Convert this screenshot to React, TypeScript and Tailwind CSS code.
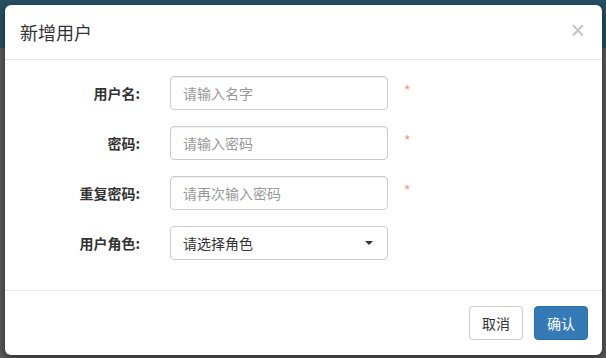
import React from "react";

const font = { fontFamily: '"Noto Sans CJK SC", "Liberation Sans", sans-serif' };

function Row({ label, placeholder, required = true }: { label: string; placeholder: string; required?: boolean }) {
  return (
    <div className="flex items-center h-[34px]">
      <label className="w-[120px] text-right text-[14px] font-bold text-[#333]">{label}</label>
      <input
        className="ml-[30px] w-[218px] h-[34px] rounded-[4px] border border-[#ccc] px-3 text-[14px] text-[#555] placeholder:text-[#999] outline-none shadow-[inset_0_1px_1px_rgba(0,0,0,0.075)]"
        placeholder={placeholder}
        style={font}
      />
      {required && <span className="ml-[16px] -mt-[6px] text-[14px] text-[#f09a7a]">*</span>}
    </div>
  );
}

export default function App() {
  return (
    <div className="relative w-[606px] h-[358px] overflow-hidden flex flex-col bg-[#5a5a5a]" style={font}>
      <div className="h-[48px] bg-[#264f63]" />
      <div className="flex-1 bg-[#5a5a5a]" />

      <div className="absolute left-[5px] top-[5px] w-[597px] h-[350px] bg-white rounded-[6px] flex flex-col shadow-[0_3px_9px_rgba(0,0,0,0.5)]">
        <div className="h-[55px] px-[15px] flex items-center justify-between border-b border-[#e5e5e5]">
          <h4 className="text-[18px] text-[#333] font-normal">新增用户</h4>
          <span className="text-[25px] leading-none text-[#c4c4c4] mr-[2px] -mt-[3px]" style={{ fontFamily: '"Liberation Sans", sans-serif' }}>×</span>
        </div>
        <div className="pt-[16px] pb-[30px] px-[15px] flex flex-col gap-[16px]">
          <Row label="用户名:" placeholder="请输入名字" />
          <Row label="密码:" placeholder="请输入密码" />
          <Row label="重复密码:" placeholder="请再次输入密码" />
          <div className="flex items-center h-[34px]">
            <label className="w-[120px] text-right text-[14px] font-bold text-[#333]">用户角色:</label>
            <div className="ml-[30px] w-[218px] h-[34px] rounded-[4px] border border-[#ccc] px-3 flex items-center justify-between text-[14px] text-[#333]">
              <span>请选择角色</span>
              <span className="w-0 h-0 border-l-[4px] border-r-[4px] border-t-[4px] border-l-transparent border-r-transparent border-t-[#333] mr-[2px]" />
            </div>
          </div>
        </div>
        <div className="flex-1 border-t border-[#e5e5e5] px-[14px] flex items-center justify-end gap-[11px]">
          <button className="h-[34px] px-[12px] rounded-[4px] border border-[#ccc] bg-white text-[14px] text-[#333]">取消</button>
          <button className="h-[34px] px-[12px] rounded-[4px] border border-[#2e6da4] bg-[#337ab7] text-[14px] text-white">确认</button>
        </div>
      </div>
    </div>
  );
}
